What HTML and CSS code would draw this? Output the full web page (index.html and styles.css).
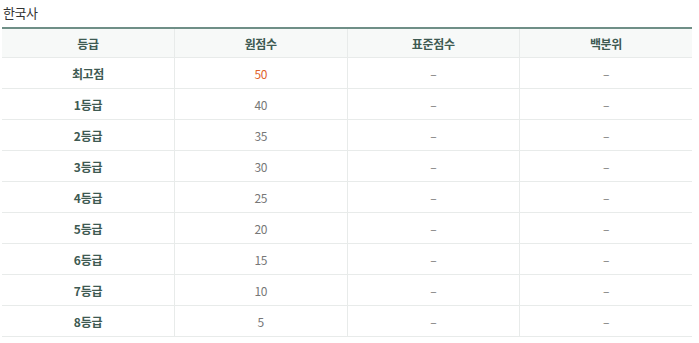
FILE: index.html
```html
<!DOCTYPE html>
<html lang="ko">
<head>
<meta charset="utf-8">
<link rel="stylesheet" href="styles.css">
</head>
<body>
<div class="wrap">
  <h3 class="title">한국사</h3>
  <table class="score">
    <thead>
      <tr><th>등급</th><th>원점수</th><th>표준점수</th><th>백분위</th></tr>
    </thead>
    <tbody>
      <tr><td class="grade">최고점</td><td class="top">50</td><td>–</td><td>–</td></tr>
      <tr><td class="grade">1등급</td><td>40</td><td>–</td><td>–</td></tr>
      <tr><td class="grade">2등급</td><td>35</td><td>–</td><td>–</td></tr>
      <tr><td class="grade">3등급</td><td>30</td><td>–</td><td>–</td></tr>
      <tr><td class="grade">4등급</td><td>25</td><td>–</td><td>–</td></tr>
      <tr><td class="grade">5등급</td><td>20</td><td>–</td><td>–</td></tr>
      <tr><td class="grade">6등급</td><td>15</td><td>–</td><td>–</td></tr>
      <tr><td class="grade">7등급</td><td>10</td><td>–</td><td>–</td></tr>
      <tr><td class="grade">8등급</td><td>5</td><td>–</td><td>–</td></tr>
    </tbody>
  </table>
</div>
</body>
</html>
```
FILE: styles.css
```css
html, body {
  margin: 0;
  padding: 0;
  background: #fff;
}
body {
  font-family: "Noto Sans CJK KR", "Noto Sans", sans-serif;
  color: #666;
}
.wrap {
  padding: 0 7px 0 2px;
}
.title {
  margin: 0;
  padding: 4px 0 0 1px;
  height: 23px;
  font-size: 13px;
  font-weight: 400;
  line-height: 17px;
  color: #333;
  letter-spacing: -0.5px;
}
.score {
  width: 690px;
  border-collapse: collapse;
  table-layout: fixed;
  border-top: 2px solid #6f8f87;
}
.score th, .score td {
  text-align: center;
  font-size: 12px;
  letter-spacing: -0.3px;
  border-bottom: 1px solid #e8ebea;
  border-left: 1px solid #e8ebea;
}
.score th:first-child, .score td:first-child {
  border-left: none;
}
.score th {
  height: 28px;
  padding: 0;
  background: #f7f9f8;
  color: #3e5a52;
  font-weight: 700;
}
.score td {
  height: 30px;
  padding: 0;
  color: #777;
  font-weight: 400;
}
.score td.grade {
  color: #3e5a52;
  font-weight: 700;
}
.score td.top {
  color: #e0622c;
}
```
